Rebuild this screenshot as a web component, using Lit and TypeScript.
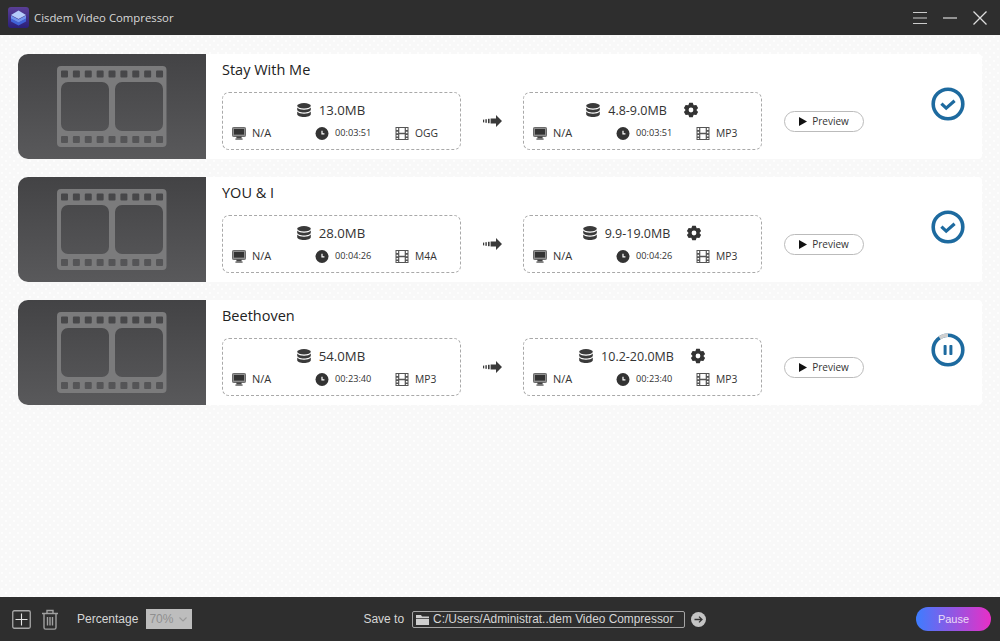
import { LitElement, html, css, svg } from "lit";
import { customElement } from "lit/decorators.js";

const filmPath = (() => {
  const rr = (x: number, y: number, w: number, h: number, r: number) =>
    `M${x + r} ${y}h${w - 2 * r}a${r} ${r} 0 0 1 ${r} ${r}v${h - 2 * r}a${r} ${r} 0 0 1 -${r} ${r}h-${w - 2 * r}a${r} ${r} 0 0 1 -${r} -${r}v-${h - 2 * r}a${r} ${r} 0 0 1 ${r} -${r}z`;
  let d = rr(0, 0, 109.5, 81, 4);
  for (let i = 0; i < 9; i++) {
    const x = 4 + i * 11.88;
    d += rr(x, 4.5, 7, 7, 1) + rr(x, 70, 7, 7, 1);
  }
  d += rr(4, 16, 48, 49, 7) + rr(58, 16, 48, 49, 7);
  return d;
})();

const gearPath = (() => {
  const n = 6;
  let d = "";
  for (let i = 0; i < n; i++) {
    const a = (i / n) * Math.PI * 2 - Math.PI / 2;
    const s = Math.PI / n;
    const pts: [number, number][] = [
      [5.4, a - s * 0.98],
      [7.4, a - s * 0.45],
      [7.4, a + s * 0.45],
      [5.4, a + s * 0.98],
    ];
    for (const [r, t] of pts) {
      const x = (8 + r * Math.cos(t)).toFixed(2);
      const y = (8 + r * Math.sin(t)).toFixed(2);
      d += `${d ? "L" : "M"}${x} ${y}`;
    }
  }
  return d + "zM8 5.6a2.4 2.4 0 1 0 0 4.8a2.4 2.4 0 1 0 0 -4.8z";
})();

const filmIcon = html`<svg class="film" viewBox="0 0 109.5 81"><path fill="#7b7b7c" fill-rule="evenodd" d=${filmPath}></path></svg>`;

const dbIcon = html`<svg class="db" viewBox="0 0 14 14"><g fill="#3a3a3a">
  <ellipse cx="7" cy="2.8" rx="6.8" ry="2.7"></ellipse>
  <path d="M.2 4.6C1.4 6.2 4 6.8 7 6.8s5.6-.6 6.8-2.2v2.2c0 1.6-3 2.8-6.8 2.8S.2 8.4.2 6.8z"></path>
  <path d="M.2 8.6c1.2 1.6 3.8 2.2 6.8 2.2s5.6-.6 6.8-2.2v2.6c0 1.6-3 2.8-6.8 2.8S.2 12.8.2 11.2z"></path>
</g></svg>`;

const gearIcon = html`<svg class="gear" viewBox="0 0 16 16"><path fill="#333" fill-rule="evenodd" d=${gearPath}></path></svg>`;

const monitorIcon = html`<svg class="sm" viewBox="0 0 14 13">
  <rect x=".5" y=".5" width="13" height="9" rx=".8" fill="#8d8d8d" stroke="#6a6a6a" stroke-width="1"></rect>
  <rect x="2" y="2" width="10" height="5.6" fill="#333"></rect>
  <rect x="4.4" y="9.4" width="5.2" height="2.2" fill="#444"></rect>
  <rect x="3.4" y="11.4" width="7.2" height="1.4" fill="#666"></rect>
</svg>`;

const clockIcon = html`<svg class="sm" viewBox="0 0 14 14">
  <circle cx="7" cy="7" r="7" fill="#333"></circle>
  <path d="M7 4v3.4h2.6" fill="none" stroke="#fff" stroke-width="1.3"></path>
</svg>`;

const smallFilm = html`<svg class="sm" viewBox="0 0 13 13"><path fill="#555" fill-rule="evenodd" d="M0 0h13v13H0zM1 1v2h1.6V1zM1 4.7v1.6h1.6V4.7zM1 8v1.6h1.6V8zM1 11v1h1.6v-1zM10.4 1v2H12V1zM10.4 4.7v1.6H12V4.7zM10.4 8v1.6H12V8zM10.4 11v1H12v-1zM3.8 1v4.8h5.4V1zM3.8 7.2V12h5.4V7.2z"></path></svg>`;

const arrowIcon = html`<svg class="arrow" viewBox="0 0 19 12"><g fill="#3a3a3a">
  <rect x="0" y="4.6" width="1.2" height="2.8"></rect>
  <rect x="2.4" y="4.2" width="1.4" height="3.6"></rect>
  <rect x="5" y="3.8" width="1.6" height="4.4"></rect>
  <path d="M7.6 3.4H13V0l6 6-6 6V8.6H7.6z"></path>
</g></svg>`;

const checkStatus = html`<svg class="status" viewBox="0 0 34 34">
  <circle cx="17" cy="17" r="14.8" fill="none" stroke="#1d6a9f" stroke-width="3.6"></circle>
  <path d="M10.4 16.6l4.8 4.6 8.4-7.4" fill="none" stroke="#1d6a9f" stroke-width="3.2"></path>
</svg>`;

const pauseStatus = html`<svg class="status" viewBox="0 0 34 34">
  <circle cx="17" cy="17" r="14.8" fill="none" stroke="#1d6a9f" stroke-width="3.6"></circle>
  <path d="M8.6 4.9A14.8 14.8 0 0 1 17 2.2" fill="none" stroke="#cfcfcf" stroke-width="3.8"></path>
  <rect x="12.6" y="12" width="3" height="10" rx=".8" fill="#1d6a9f"></rect>
  <rect x="18.4" y="12" width="3" height="10" rx=".8" fill="#1d6a9f"></rect>
</svg>`;

const playIcon = svg`<path d="M0 0l8 4.5L0 9z" fill="#111"></path>`;

interface Row {
  title: string;
  size: string;
  out: string;
  time: string;
  fmt: string;
  done: boolean;
}

const rows: Row[] = [
  { title: "Stay With Me", size: "13.0MB", out: "4.8-9.0MB", time: "00:03:51", fmt: "OGG", done: true },
  { title: "YOU & I", size: "28.0MB", out: "9.9-19.0MB", time: "00:04:26", fmt: "M4A", done: true },
  { title: "Beethoven", size: "54.0MB", out: "10.2-20.0MB", time: "00:23:40", fmt: "MP3", done: false },
];

@customElement("app-root")
export class AppRoot extends LitElement {
  static styles = css`
    :host {
      display: flex;
      flex-direction: column;
      height: 100vh;
      overflow: hidden;
      font-family: "Open Sans", "Noto Sans", sans-serif;
      color: #333;
    }
    .titlebar {
      height: 35px;
      flex: none;
      background: #2e2e2e;
      display: flex;
      align-items: center;
      padding: 0 13px 0 8px;
      color: #d8d8d8;
      font-size: 11.35px;
    }
    .logo {
      width: 21px;
      height: 21px;
      margin-right: 5px;
    }
    .spacer {
      flex: 1;
    }
    .winbtns {
      display: flex;
      gap: 16px;
      align-items: center;
    }
    .winbtns svg {
      width: 14px;
      height: 14px;
      display: block;
    }
    .content {
      flex: 1;
      min-height: 0;
      background-color: #f8f8f8;
      background-image: radial-gradient(circle at 2px 2px, #fdfdfd 1.2px, transparent 1.6px),
        radial-gradient(circle at 6px 6px, #fdfdfd 1.2px, transparent 1.6px);
      background-size: 8px 8px;
      padding: 19px 18px 0;
      display: flex;
      flex-direction: column;
      gap: 18px;
    }
    .card {
      height: 105px;
      background: #fff;
      display: flex;
      border-radius: 10px 4px 4px 10px;
    }
    .thumb {
      width: 188px;
      flex: none;
      border-radius: 10px 0 0 10px;
      background: linear-gradient(#434345, #59595b);
      display: flex;
      align-items: center;
      padding-left: 39px;
      box-sizing: border-box;
    }
    .film {
      width: 109.5px;
      height: 81px;
      display: block;
    }
    .body {
      padding-left: 16px;
      display: flex;
      flex-direction: column;
    }
    .title {
      font-size: 14.5px;
      line-height: 20px;
      padding-top: 6px;
      margin-bottom: 12px;
      color: #222;
    }
    .line {
      display: flex;
      align-items: center;
    }
    .box {
      width: 239px;
      height: 58px;
      box-sizing: border-box;
      border: 1px dashed #a9a9a9;
      border-radius: 7px;
      display: flex;
      flex-direction: column;
      padding-top: 7px;
    }
    .top {
      height: 20px;
      display: flex;
      align-items: center;
      justify-content: center;
      gap: 8px;
      font-size: 12.5px;
      color: #333;
    }
    .top.src {
      padding-right: 21px;
      font-size: 13.2px;
    }
    .db {
      width: 14px;
      height: 14px;
      flex: none;
    }
    .gear {
      width: 16px;
      height: 16px;
      margin-left: 8px;
      flex: none;
    }
    .meta {
      margin-top: 5px;
      padding-left: 9px;
      display: grid;
      grid-template-columns: 83px 80px auto;
      font-size: 10.3px;
      line-height: 16px;
      color: #333;
    }
    .meta > div {
      display: flex;
      align-items: center;
      gap: 6px;
    }
    .time {
      font-size: 9.2px;
    }
    .na {
      font-size: 11px;
    }
    .sm {
      width: 14px;
      height: 13px;
      flex: none;
    }
    .arrowwrap {
      width: 62px;
      display: flex;
      justify-content: center;
    }
    .arrow {
      width: 19px;
      height: 12px;
      display: block;
    }
    .preview {
      width: 80px;
      height: 21px;
      margin-left: 22px;
      box-sizing: border-box;
      border: 1px solid #bbb;
      border-radius: 11px;
      background: #fff;
      display: flex;
      align-items: center;
      justify-content: center;
      gap: 5px;
      font-size: 10px;
      color: #333;
    }
    .preview svg {
      width: 8px;
      height: 9px;
    }
    .status {
      width: 34px;
      height: 34px;
      flex: none;
      margin: 33px 0 0 67px;
    }
    .bottombar {
      height: 44px;
      flex: none;
      background: #2e2e2e;
      display: flex;
      align-items: center;
      padding: 0 9px 0 12px;
      font-family: "Liberation Sans", Arial, sans-serif;
      font-size: 12px;
      color: #d6d6d6;
    }
    .bicon {
      display: block;
      flex: none;
    }
    .trash {
      margin-left: 10px;
    }
    .pct {
      margin: 0 8px 0 18px;
    }
    .select {
      width: 46px;
      height: 20px;
      background: #bdbdbd;
      color: #8f8f8f;
      display: flex;
      align-items: center;
      justify-content: space-between;
      padding: 0 5px 0 3px;
      box-sizing: border-box;
      font-size: 12px;
    }
    .saveto {
      margin: 0 8px 0 171px;
    }
    .path {
      width: 273px;
      height: 17px;
      box-sizing: border-box;
      border: 1px solid #a5a5a5;
      border-radius: 2px;
      display: flex;
      align-items: center;
      gap: 4px;
      padding-left: 3px;
      font-size: 11.9px;
      white-space: nowrap;
    }
    .go {
      margin-left: 6px;
    }
    .pause {
      width: 75px;
      height: 24px;
      border-radius: 12px;
      background: linear-gradient(90deg, #3d7dff, #e82fc6);
      color: #ecdcf6;
      font-size: 11px;
      display: flex;
      align-items: center;
      justify-content: center;
    }
  `;

  private renderRow(r: Row) {
    return html`<div class="card">
      <div class="thumb">${filmIcon}</div>
      <div class="body">
        <div class="title">${r.title}</div>
        <div class="line">
          <div class="box">
            <div class="top src">${dbIcon}<span>${r.size}</span></div>
            <div class="meta">
              <div>${monitorIcon}<span class="na">N/A</span></div>
              <div>${clockIcon}<span class="time">${r.time}</span></div>
              <div>${smallFilm}<span>${r.fmt}</span></div>
            </div>
          </div>
          <div class="arrowwrap">${arrowIcon}</div>
          <div class="box">
            <div class="top">${dbIcon}<span>${r.out}</span>${gearIcon}</div>
            <div class="meta">
              <div>${monitorIcon}<span class="na">N/A</span></div>
              <div>${clockIcon}<span class="time">${r.time}</span></div>
              <div>${smallFilm}<span>MP3</span></div>
            </div>
          </div>
          <div class="preview"><svg viewBox="0 0 8 9">${playIcon}</svg><span>Preview</span></div>
        </div>
      </div>
      ${r.done ? checkStatus : pauseStatus}
    </div>`;
  }

  render() {
    return html`
      <div class="titlebar">
        <svg class="logo" viewBox="0 0 21 21">
          <defs>
            <linearGradient id="lg" x1="0" y1="0" x2="0" y2="1">
              <stop offset="0" stop-color="#5a3f96"></stop>
              <stop offset="1" stop-color="#2a1f7a"></stop>
            </linearGradient>
          </defs>
          <rect width="21" height="21" rx="3" fill="url(#lg)"></rect>
          <path d="M3 11.5l7.5 4 7.5-4v3l-7.5 4-7.5-4z" fill="#3f62d8"></path>
          <path d="M3 8.5l7.5 4 7.5-4v3l-7.5 4-7.5-4z" fill="#6f93ee"></path>
          <path d="M10.5 3.5l7.5 4.4-7.5 4.2-7.5-4.2z" fill="#b5ccfa"></path>
        </svg>
        <span>Cisdem Video Compressor</span>
        <div class="spacer"></div>
        <div class="winbtns">
          <svg viewBox="0 0 14 14"><path d="M0 1.5h14M0 7h14M0 12.5h14" stroke="#ccc" stroke-width="1.2"></path></svg>
          <svg viewBox="0 0 14 14"><path d="M0 7h14" stroke="#ccc" stroke-width="1.3"></path></svg>
          <svg viewBox="0 0 14 14"><path d="M.5 .5l13 13M13.5 .5l-13 13" stroke="#ddd" stroke-width="1.3"></path></svg>
        </div>
      </div>
      <div class="content">${rows.map((r) => this.renderRow(r))}</div>
      <div class="bottombar">
        <svg class="bicon" width="19" height="19" viewBox="0 0 19 19">
          <rect x=".75" y=".75" width="17.5" height="17.5" rx="1.5" fill="none" stroke="#a8a8a8" stroke-width="1.3"></rect>
          <path d="M9.5 3.5v12M3.5 9.5h12" stroke="#e4e4e4" stroke-width="1.1"></path>
        </svg>
        <svg class="bicon trash" width="18" height="21" viewBox="0 0 18 21">
          <path d="M1 4.5h16M6 4.5V1.5h6v3" fill="none" stroke="#a0a0a0" stroke-width="1.4"></path>
          <path d="M3 4.5v14a1.6 1.6 0 0 0 1.6 1.6h8.8a1.6 1.6 0 0 0 1.6-1.6v-14" fill="none" stroke="#a0a0a0" stroke-width="1.4"></path>
          <path d="M6.5 8v8.5M9 8v8.5M11.5 8v8.5" stroke="#a0a0a0" stroke-width="1.4"></path>
        </svg>
        <span class="pct">Percentage</span>
        <div class="select"><span>70%</span>
          <svg width="8" height="5" viewBox="0 0 8 5"><path d="M.5 .5L4 4l3.5-3.5" fill="none" stroke="#9a9a9a" stroke-width="1.1"></path></svg>
        </div>
        <span class="saveto">Save to</span>
        <div class="path">
          <svg width="13" height="11" viewBox="0 0 13 11"><path d="M0 1h5l1 1.5h7V4H0z M0 4.8h13V11H0z" fill="#cfcfcf"></path></svg>
          <span>C:/Users/Administrat..dem Video Compressor</span>
        </div>
        <svg class="go" width="15" height="15" viewBox="0 0 15 15">
          <circle cx="7.5" cy="7.5" r="7.5" fill="#c4c4c4"></circle>
          <path d="M3.5 7.5h7M8 4.6l3 2.9-3 2.9" fill="none" stroke="#333" stroke-width="1.3"></path>
        </svg>
        <div class="spacer"></div>
        <div class="pause">Pause</div>
      </div>
    `;
  }
}
